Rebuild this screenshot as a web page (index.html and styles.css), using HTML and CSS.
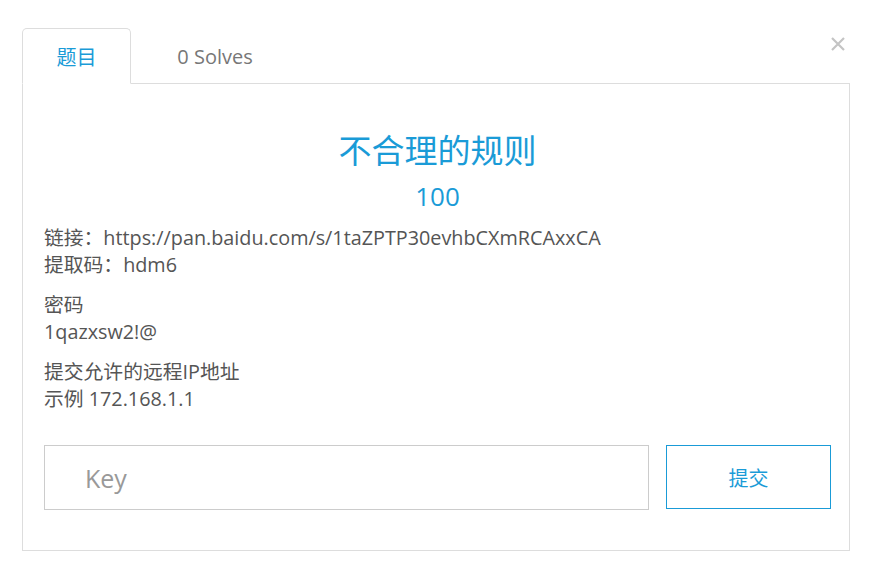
FILE: index.html
```html
<!DOCTYPE html>
<html lang="zh">
<head>
    <meta charset="UTF-8">
    <meta name="viewport" content="width=device-width, initial-scale=1.0">
    <title>不合理的规则</title>
    <link rel="stylesheet" href="styles.css">
</head>
<body>

    <div class="modal">
        <button class="close" type="button" aria-label="Close">
            <svg width="14" height="14" viewBox="0 0 14 14"><path d="M1 1L13 13M13 1L1 13" stroke="#c4c4c4" stroke-width="2.2"/></svg>
        </button>

        <ul class="tabs">
            <li class="tab active">题目</li>
            <li class="tab">0 Solves</li>
        </ul>

        <div class="tab-content">
            <h2 class="title">不合理的规则</h2>
            <div class="value">100</div>

            <div class="desc">
                <p>链接：https://pan.baidu.com/s/1taZPTP30evhbCXmRCAxxCA<br>提取码：hdm6</p>
                <p>密码<br>1qazxsw2!@</p>
                <p>提交允许的远程IP地址<br>示例 172.168.1.1</p>
            </div>

            <form class="submit-row">
                <input type="text" class="key" placeholder="Key">
                <button type="button" class="submit">提交</button>
            </form>
        </div>
    </div>

</body>
</html>
```

FILE: styles.css
```css
body {
    margin: 0;
    background-color: #fff;
    font-family: "Open Sans", "Noto Sans CJK SC", sans-serif;
    color: #555;
}
.modal {
    position: relative;
    padding: 28px 21px 0 22px;
}
.close {
    position: absolute;
    top: 37px;
    right: 26px;
    border: none;
    background: none;
    padding: 0;
    line-height: 0;
    cursor: pointer;
}
.tabs {
    display: flex;
    list-style: none;
    margin: 0;
    padding: 0;
    border-bottom: 1px solid #ddd;
}
.tab {
    width: 109px;
    height: 56px;
    margin-bottom: -1px;
    display: flex;
    align-items: center;
    justify-content: center;
    font-size: 20px;
    color: #777;
    border: 1px solid transparent;
    border-radius: 5px 5px 0 0;
    box-sizing: border-box;
}
.tab.active {
    color: #1a9bd7;
    border-color: #ddd;
    border-bottom-color: #fff;
    background: #fff;
}
.tab + .tab {
    width: 168px;
}
.tab-content {
    border: 1px solid #ddd;
    border-top: none;
    padding: 42px 18px 40px 21px;
}
.title {
    margin: 0;
    text-align: center;
    font-size: 33px;
    font-weight: 400;
    color: #1a9bd7;
    line-height: 50px;
}
.value {
    margin-top: 2px;
    text-align: center;
    font-size: 26px;
    color: #1a9bd7;
    line-height: 36px;
}
.desc {
    margin-top: 10px;
}
.desc p {
    margin: 0 0 13px;
    font-size: 19.8px;
    line-height: 27px;
}
.submit-row {
    display: flex;
    align-items: flex-start;
    gap: 17px;
    margin-top: 33px;
}
.key {
    flex: 1;
    height: 65px;
    box-sizing: border-box;
    border: 1px solid #ccc;
    padding: 0 40px;
    font-family: inherit;
    font-size: 25px;
    color: #555;
    outline: none;
}
.key::placeholder {
    color: #999;
}
.submit {
    width: 165px;
    height: 64px;
    box-sizing: border-box;
    border: 1px solid #1a9bd7;
    background: #fff;
    color: #1a9bd7;
    font-family: inherit;
    font-size: 20px;
    cursor: pointer;
}
```
